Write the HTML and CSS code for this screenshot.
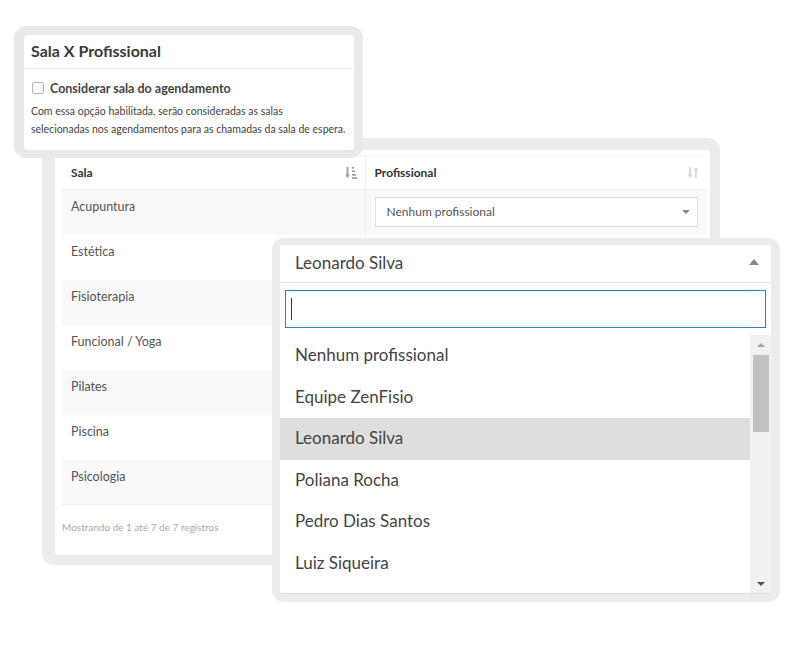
FILE: index.html
```html
<!DOCTYPE html>
<html lang="pt-BR">
<head>
<meta charset="utf-8">
<title>Sala X Profissional</title>
<link rel="stylesheet" href="styles.css">
</head>
<body>
<div class="stage">
  <section class="table-frame">
    <div class="table-card">
      <table class="grid">
        <colgroup><col class="c1"><col class="c2"></colgroup>
        <thead>
          <tr>
            <th><span>Sala</span>
              <svg class="sort sort-on" width="12" height="13" viewBox="0 0 12 13"><path d="M2.5 1v9" stroke="currentColor" stroke-width="1.8"/><path d="M0 8.5l2.5 3.5 2.5-3.5z" fill="currentColor"/><rect x="7" y="1" width="2" height="1.7" fill="currentColor"/><rect x="7" y="4.5" width="3" height="1.7" fill="currentColor"/><rect x="7" y="8" width="4" height="1.7" fill="currentColor"/><rect x="7" y="11.3" width="5" height="1.7" fill="currentColor"/></svg>
            </th>
            <th class="col2"><span>Profissional</span>
              <svg class="sort sort-off" width="12" height="13" viewBox="0 0 12 13"><path d="M3 1v9" stroke="currentColor" stroke-width="1.8"/><path d="M0.5 8.5l2.5 3.5 2.5-3.5z" fill="currentColor"/><path d="M9 12V3" stroke="currentColor" stroke-width="1.8"/><path d="M6.5 4.5L9 1l2.5 3.5z" fill="currentColor"/></svg>
            </th>
          </tr>
        </thead>
        <tbody>
          <tr class="odd"><td>Acupuntura</td><td class="col2"><div class="select"><span>Nenhum profissional</span><i class="caret-down"></i></div></td></tr>
          <tr><td>Estética</td><td class="col2"></td></tr>
          <tr class="odd"><td>Fisioterapia</td><td class="col2"></td></tr>
          <tr><td>Funcional / Yoga</td><td class="col2"></td></tr>
          <tr class="odd"><td>Pilates</td><td class="col2"></td></tr>
          <tr><td>Piscina</td><td class="col2"></td></tr>
          <tr class="odd"><td>Psicologia</td><td class="col2"></td></tr>
        </tbody>
      </table>
      <p class="info">Mostrando de 1 até 7 de 7 registros</p>
    </div>
  </section>

  <section class="option-frame">
    <div class="option-card">
      <h2 class="option-title">Sala X Profissional</h2>
      <div class="option-body">
        <label class="check-row"><span class="checkbox"></span><span class="check-label">Considerar sala do agendamento</span></label>
        <p class="desc">Com essa opção habilitada, serão consideradas as salas<br>selecionadas nos agendamentos para as chamadas da sala de espera.</p>
      </div>
    </div>
  </section>

  <div class="dropdown-frame">
    <div class="dropdown">
      <div class="dd-head"><span>Leonardo Silva</span><i class="caret-up"></i></div>
      <div class="dd-search"><span class="cursor"></span></div>
      <div class="dd-list">
        <ul class="dd-items">
          <li>Nenhum profissional</li>
          <li>Equipe ZenFisio</li>
          <li class="active">Leonardo Silva</li>
          <li>Poliana Rocha</li>
          <li>Pedro Dias Santos</li>
          <li>Luiz Siqueira</li>
        </ul>
        <div class="scrollbar">
          <i class="sb-up"></i>
          <div class="sb-thumb"></div>
          <i class="sb-down"></i>
        </div>
      </div>
    </div>
  </div>
</div>
</body>
</html>
```

FILE: styles.css
```css
* { box-sizing: border-box; }
body {
  margin: 0;
  background: #fff;
  font-family: Lato, "Open Sans", "Liberation Sans", sans-serif;
  color: #555;
}
.stage {
  position: relative;
  width: 800px;
  height: 648px;
  overflow: hidden;
}

/* ---------- table panel ---------- */
.table-frame {
  margin: 138px 0 0 42px;
  width: 678px;
  padding: 12px 10px 10px 13px;
  background: #ececec;
  border-radius: 12px;
}
.table-card {
  background: #fff;
  border-radius: 4px;
  padding: 5px 3px 0 7px;
  height: 405px;
}
.grid {
  width: 645px;
  border-collapse: collapse;
  table-layout: fixed;
}
.grid col.c1 { width: 303px; }
.grid col.c2 { width: 342px; }
.grid th {
  height: 34px;
  padding: 0 9px 1px;
  text-align: left;
  font-size: 12px;
  font-weight: 700;
  color: #333;
  border-top: 1px solid #f3f3f3;
  border-bottom: 1px solid #eee;
  position: relative;
}
.grid th span { vertical-align: middle; }
.grid .col2 { border-left: 1px solid #f0f0f0; }
.sort {
  position: absolute;
  right: 8px;
  top: 10px;
}
.sort-on { color: #9d9d9d; }
.sort-off { color: #d6d6d6; }
.grid td {
  height: 45px;
  padding: 9px 9px 7px;
  vertical-align: top;
  font-size: 12.5px;
  line-height: 16px;
  color: #555;
}
.grid td.col2 { padding: 7px 9px; }
.grid tr.odd td { background: #f9f9f9; }
.grid tbody tr:last-child td { border-bottom: 1px solid #eee; }
.select {
  height: 30px;
  border: 1px solid #ddd;
  background: #fff;
  display: flex;
  align-items: center;
  justify-content: space-between;
  padding: 0 7px 0 11px;
  font-size: 12px;
  color: #555;
}
.caret-down {
  width: 0; height: 0;
  border-left: 4px solid transparent;
  border-right: 4px solid transparent;
  border-top: 4px solid #888;
}
.info {
  margin: 15px 0 0;
  font-size: 10px;
  line-height: 14px;
  color: #aaa;
}

/* ---------- option card ---------- */
.option-frame {
  position: absolute;
  left: 14px;
  top: 26px;
  width: 349px;
  height: 132px;
  padding: 9px 9px 8px 10px;
  background: #e9e9e9;
  border-radius: 12px;
}
.option-card {
  background: #fff;
  border-radius: 4px;
  height: 115px;
}
.option-title {
  margin: 0;
  height: 34px;
  line-height: 31px;
  padding: 0 7px;
  font-size: 16px;
  font-weight: 700;
  color: #3a3a3a;
  border-bottom: 1px solid #eee;
}
.option-body { padding: 11px 7px 0; }
.check-row {
  display: flex;
  align-items: center;
  height: 16px;
  gap: 6px;
  padding-left: 1px;
}
.checkbox {
  width: 12px;
  height: 12px;
  border: 1px solid #b5b5b5;
  border-radius: 2px;
  background: #fff;
}
.check-label {
  font-size: 12.5px;
  font-weight: 700;
  color: #444;
}
.desc {
  margin: 6px 0 0;
  font-size: 10.5px;
  line-height: 18px;
  color: #444;
  white-space: nowrap;
}

/* ---------- dropdown ---------- */
.dropdown-frame {
  position: absolute;
  left: 272px;
  top: 238px;
  width: 508px;
  height: 364px;
  padding: 7px 9px 8px 8px;
  background: #ececec;
  border-radius: 12px;
}
.dropdown {
  background: #fff;
  height: 349px;
  border-radius: 2px;
  border-bottom: 1px solid #ddd;
  overflow: hidden;
}
.dd-head {
  height: 38px;
  border-bottom: 1px solid #e3e3e3;
  display: flex;
  align-items: center;
  justify-content: space-between;
  padding: 0 12px 3px 15px;
  font-size: 17px;
  color: #444;
}
.caret-up {
  width: 0; height: 0;
  border-left: 5px solid transparent;
  border-right: 5px solid transparent;
  border-bottom: 6px solid #888;
}
.dd-search {
  margin: 7px 5px 0;
  height: 38px;
  border: 1px solid #1f8ab5;
  display: flex;
  align-items: center;
  padding-left: 5px;
}
.cursor {
  width: 1px;
  height: 22px;
  background: #333;
}
.dd-list {
  margin-top: 7px;
  height: 259px;
  display: flex;
}
.dd-items {
  list-style: none;
  margin: 0;
  padding: 0;
  flex: 1;
}
.dd-items li {
  height: 41.6px;
  line-height: 39px;
  padding-left: 15px;
  font-size: 17px;
  color: #444;
}
.dd-items li.active { background: #dedede; }
.scrollbar {
  width: 21px;
  background: #f1f1f1;
  display: flex;
  flex-direction: column;
  align-items: center;
  position: relative;
}
.sb-up {
  margin-top: 8px;
  width: 0; height: 0;
  border-left: 4px solid transparent;
  border-right: 4px solid transparent;
  border-bottom: 4px solid #a3a3a3;
}
.sb-thumb {
  margin-top: 8px;
  width: 16px;
  height: 77px;
  background: #c1c1c1;
}
.sb-down {
  margin-top: auto;
  margin-bottom: 8px;
  width: 0; height: 0;
  border-left: 4px solid transparent;
  border-right: 4px solid transparent;
  border-top: 4px solid #505050;
}
```
